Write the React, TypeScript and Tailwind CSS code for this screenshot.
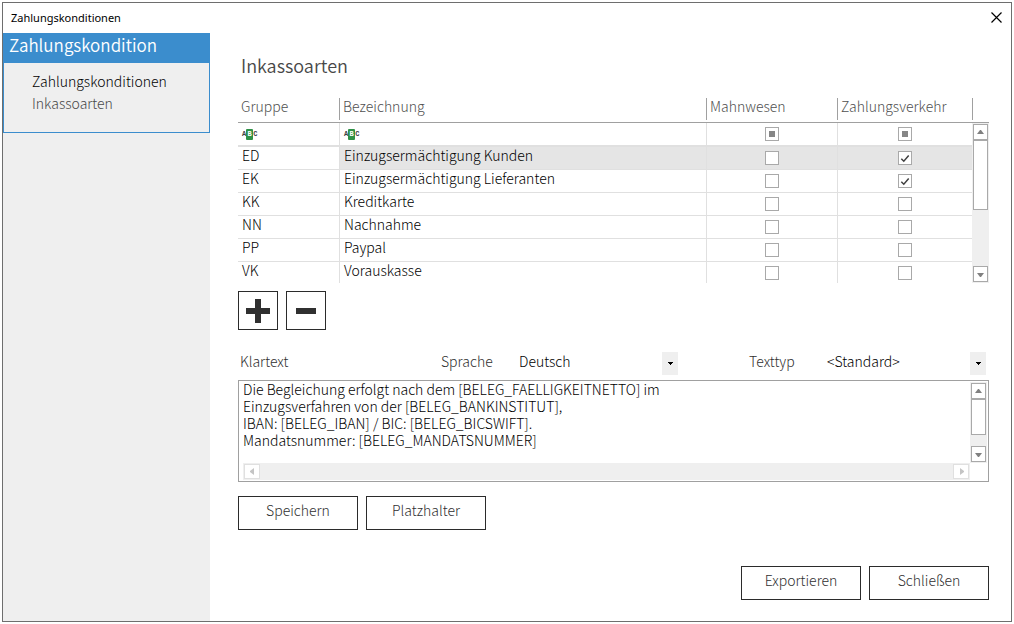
import { useState } from "react";

type Row = { code: string; name: string; dunning: boolean; payment: boolean };

const initialRows: Row[] = [
  { code: "ED", name: "Einzugsermächtigung Kunden", dunning: false, payment: true },
  { code: "EK", name: "Einzugsermächtigung Lieferanten", dunning: false, payment: true },
  { code: "KK", name: "Kreditkarte", dunning: false, payment: false },
  { code: "NN", name: "Nachnahme", dunning: false, payment: false },
  { code: "PP", name: "Paypal", dunning: false, payment: false },
  { code: "VK", name: "Vorauskasse", dunning: false, payment: false },
];

const initialText = `Die Begleichung erfolgt nach dem [BELEG_FAELLIGKEITNETTO] im
Einzugsverfahren von der [BELEG_BANKINSTITUT],
IBAN: [BELEG_IBAN] / BIC: [BELEG_BICSWIFT].
Mandatsnummer: [BELEG_MANDATSNUMMER]`;

function Arrow({ direction }: { direction: "up" | "down" | "left" | "right" }) {
  const points = {
    up: "0,5 3,1 4,1 7,5",
    down: "0,2 7,2 4,6 3,6",
    left: "5,0 5,7 1,4 1,3",
    right: "2,0 6,3 6,4 2,7",
  };
  return (
    <svg viewBox="0 0 7 7" className="size-[7px] fill-current" aria-hidden="true">
      <polygon points={points[direction]} />
    </svg>
  );
}

function VerticalScrollbar({ thumb }: { thumb: "long" | "short" }) {
  return (
    <div className="flex flex-1 flex-col bg-[#efefef] p-px text-[#808080]">
      <button type="button" aria-label="Nach oben" className="flex h-4 shrink-0 items-center justify-center border border-[#a9a9a9] bg-white">
        <Arrow direction="up" />
      </button>
      <div className={`${thumb === "long" ? "h-[70px]" : "h-9"} shrink-0 border border-[#a9a9a9] bg-white`} />
      <div className="flex-1" />
      <button type="button" aria-label="Nach unten" className="flex h-4 shrink-0 items-center justify-center border border-[#a9a9a9] bg-white">
        <Arrow direction="down" />
      </button>
    </div>
  );
}

function Check({ label, checked, onChange }: { label: string; checked: boolean; onChange: () => void }) {
  return (
    <span className="relative mx-auto flex size-3.5">
      <input type="checkbox" aria-label={label} checked={checked} onChange={onChange} className="size-3.5 appearance-none border border-[#a9a9a9] bg-white" />
      {checked && (
        <svg viewBox="0 0 14 14" className="pointer-events-none absolute inset-0 size-3.5" fill="none" stroke="#404040" strokeWidth="1.5" aria-hidden="true">
          <path d="M3.3 7.7 L5.8 10.2 L10.7 4.6" />
        </svg>
      )}
    </span>
  );
}

function FilterCheck({ label }: { label: string }) {
  return (
    <span className="relative mx-auto flex size-3.5">
      <input type="checkbox" aria-label={label} className="size-3.5 appearance-none border border-[#a9a9a9] bg-white" />
      <span className="pointer-events-none absolute inset-1 bg-[#868686]" />
    </span>
  );
}

function AbcFilter({ label }: { label: string }) {
  return (
    <button type="button" aria-label={label} className="ml-1 flex h-[11px] items-center font-['Liberation_Mono'] text-[7px] leading-[11px] font-bold text-[#404040]">
      <span>A</span>
      <span className="h-[11px] w-[7px] rounded-[1px] bg-[#2f9147] text-center text-white">B</span>
      <span>C</span>
    </button>
  );
}

function Dropdown({ id, label, options }: { id: string; label: string; options: string[] }) {
  return (
    <div className="flex flex-1 items-center">
      <label htmlFor={id} className="w-[74px] shrink-0 pb-1.5">{label}</label>
      <div className="relative flex flex-1">
        <select id={id} className="h-[23px] w-full appearance-none bg-white pb-1 pl-1 leading-[19px] text-black">
          {options.map((o) => (
            <option key={o}>{o}</option>
          ))}
        </select>
        <span className="pointer-events-none absolute inset-y-0 right-0 flex w-4 items-center justify-center bg-[#efefef]">
          <svg viewBox="0 0 5 3" className="h-[3px] w-[5px]" aria-hidden="true">
            <path d="M0 0H5V1H4V2H3V3H2V2H1V1H0Z" fill="#000" />
          </svg>
        </span>
      </div>
    </div>
  );
}

function ActionButton({ children }: { children: string }) {
  return (
    <button type="button" className="h-[34px] w-[120px] border border-[#2b2b2b] bg-white pb-1.5 text-[#303030]">
      {children}
    </button>
  );
}

export default function App() {
  const [rows, setRows] = useState(initialRows);
  const [selected, setSelected] = useState(0);
  const [text, setText] = useState(initialText);

  const toggle = (index: number, key: "dunning" | "payment") =>
    setRows(rows.map((r, i) => (i === index ? { ...r, [key]: !r[key] } : r)));

  return (
    <div className="flex min-h-screen bg-white p-0.5 font-['Noto_Sans_CJK_SC',sans-serif] text-sm leading-5 font-light text-[#303030]">
      <div className="flex flex-1 flex-col border border-[#6e6e6e] bg-white">
        <header className="flex h-[30px] items-center justify-between pr-[9px] pl-2 text-black">
          <h1 className="font-['Noto_Sans',sans-serif] text-[11px] font-normal">Zahlungskonditionen</h1>
          <button type="button" aria-label="Fenster schließen" className="pb-0.5">
            <svg viewBox="0 0 11 11" className="size-[11px]" stroke="#000" strokeWidth="1.2" aria-hidden="true">
              <path d="M0.5 0.5 L10.5 10.5 M10.5 0.5 L0.5 10.5" />
            </svg>
          </button>
        </header>

        <div className="flex flex-1">
          <aside className="w-[207px] shrink-0 bg-[#efefef]">
            <h2 className="h-[30px] bg-[#3b8dcd] pl-1.5 text-[17px] leading-6 font-[350] text-white">Zahlungskondition</h2>
            <nav className="flex h-[70px] flex-col border border-t-0 border-[#3b8dcd] pt-[7px] pl-7 leading-[22px]">
              <a href="#zahlungskonditionen" className="text-black">Zahlungskonditionen</a>
              <a href="#inkassoarten" className="text-[#484848]">Inkassoarten</a>
            </nav>
          </aside>

          <main className="flex min-w-0 flex-1 flex-col pr-[22px] pb-[21px] pl-7">
            <h2 className="mt-5 pl-[3px] text-lg leading-6 font-[350] text-[#484848]">Inkassoarten</h2>

            <div className="mt-[21px] flex">
              <table className="min-w-0 flex-1 table-fixed border-separate border-spacing-0 text-black">
                <colgroup>
                  <col className="w-[101px]" />
                  <col />
                  <col className="w-[131px]" />
                  <col className="w-[135px]" />
                </colgroup>
                <thead className="text-[#505050]">
                  <tr>
                    {["Gruppe", "Bezeichnung", "Mahnwesen", "Zahlungsverkehr"].map((h, i) => (
                      <th key={h} className="h-[25px] border-b border-[#a0a0a0] p-0 text-left align-top font-light">
                        <div className={`h-[22px] pl-[3px] leading-4 ${i > 0 ? "border-l border-[#a0a0a0]" : ""}`}>{h}</div>
                      </th>
                    ))}
                  </tr>
                </thead>
                <tbody>
                  <tr>
                    <td className="h-6 border-b-2 border-[#e0e0e0] p-0"><AbcFilter label="Gruppe filtern" /></td>
                    <td className="h-6 border-b-2 border-l border-[#e0e0e0] p-0"><AbcFilter label="Bezeichnung filtern" /></td>
                    <td className="h-6 border-b-2 border-l border-[#e0e0e0] p-0"><FilterCheck label="Mahnwesen filtern" /></td>
                    <td className="h-6 border-b-2 border-l border-[#e0e0e0] p-0"><FilterCheck label="Zahlungsverkehr filtern" /></td>
                  </tr>
                  {rows.map((row, i) => {
                    const line = i < rows.length - 1 ? "h-[23px] border-b" : "h-[21px]";
                    const fill = i === selected ? "bg-[#e5e5e5]" : "bg-white";
                    return (
                      <tr key={row.code} onClick={() => setSelected(i)}>
                        <td className={`${line} border-[#e0e0e0] p-0 pl-1 align-top leading-4`}>{row.code}</td>
                        <td className={`${line} ${fill} border-l border-[#e0e0e0] p-0 pl-1 align-top leading-4`}>{row.name}</td>
                        <td className={`${line} ${fill} border-l border-[#e0e0e0] p-0 pt-1 align-top`}>
                          <Check label={`${row.name}: Mahnwesen`} checked={row.dunning} onChange={() => toggle(i, "dunning")} />
                        </td>
                        <td className={`${line} ${fill} border-l border-[#e0e0e0] p-0 pt-1 align-top`}>
                          <Check label={`${row.name}: Zahlungsverkehr`} checked={row.payment} onChange={() => toggle(i, "payment")} />
                        </td>
                      </tr>
                    );
                  })}
                </tbody>
              </table>
              <div className="flex w-[17px] shrink-0 flex-col">
                <div className="h-[25px] border-b border-[#a0a0a0]">
                  <div className="h-[22px] border-l border-[#a0a0a0]" />
                </div>
                <VerticalScrollbar thumb="long" />
              </div>
            </div>

            <div className="mt-2 flex gap-2">
              <button type="button" aria-label="Hinzufügen" className="flex h-[39px] w-10 items-center justify-center border border-[#2b2b2b]">
                <svg viewBox="0 0 24 24" className="size-6" fill="#303030" aria-hidden="true">
                  <path d="M9 0H15V9H24V15H15V24H9V15H0V9H9Z" />
                </svg>
              </button>
              <button type="button" aria-label="Entfernen" className="flex h-[39px] w-10 items-center justify-center border border-[#2b2b2b]">
                <svg viewBox="0 0 20 6" className="h-1.5 w-5" fill="#303030" aria-hidden="true">
                  <rect width="20" height="6" />
                </svg>
              </button>
            </div>

            <div className="mt-[22px] flex h-[23px] items-center pr-[3px] pl-0.5">
              <label htmlFor="klartext" className="w-[201px] shrink-0 pb-1.5">Klartext</label>
              <div className="flex flex-1 gap-[71px]">
                <Dropdown id="sprache" label="Sprache" options={["Deutsch", "Englisch"]} />
                <Dropdown id="texttyp" label="Texttyp" options={["<Standard>"]} />
              </div>
            </div>

            <div className="mt-[5px] flex h-[102px] flex-col border border-[#a0a0a0] pr-px pb-px pl-1">
              <div className="flex min-h-0 flex-1">
                <textarea
                  id="klartext"
                  wrap="off"
                  value={text}
                  onChange={(e) => setText(e.target.value)}
                  className="min-w-0 flex-1 resize-none overflow-hidden leading-[17px] text-black outline-none"
                />
                <div className="flex w-[17px] shrink-0 flex-col pt-px">
                  <VerticalScrollbar thumb="short" />
                </div>
              </div>
              <div className="mr-[17px] flex h-[17px] shrink-0 justify-between bg-[#efefef] p-px text-[#c4c4c4]">
                <button type="button" aria-label="Nach links" className="flex w-4 items-center justify-center border border-[#e0e0e0] bg-white">
                  <Arrow direction="left" />
                </button>
                <button type="button" aria-label="Nach rechts" className="flex w-4 items-center justify-center border border-[#e0e0e0] bg-white">
                  <Arrow direction="right" />
                </button>
              </div>
            </div>

            <div className="mt-3.5 flex gap-2">
              <ActionButton>Speichern</ActionButton>
              <ActionButton>Platzhalter</ActionButton>
            </div>

            <div className="mt-auto flex justify-end gap-2">
              <ActionButton>Exportieren</ActionButton>
              <ActionButton>Schließen</ActionButton>
            </div>
          </main>
        </div>
      </div>
    </div>
  );
}
